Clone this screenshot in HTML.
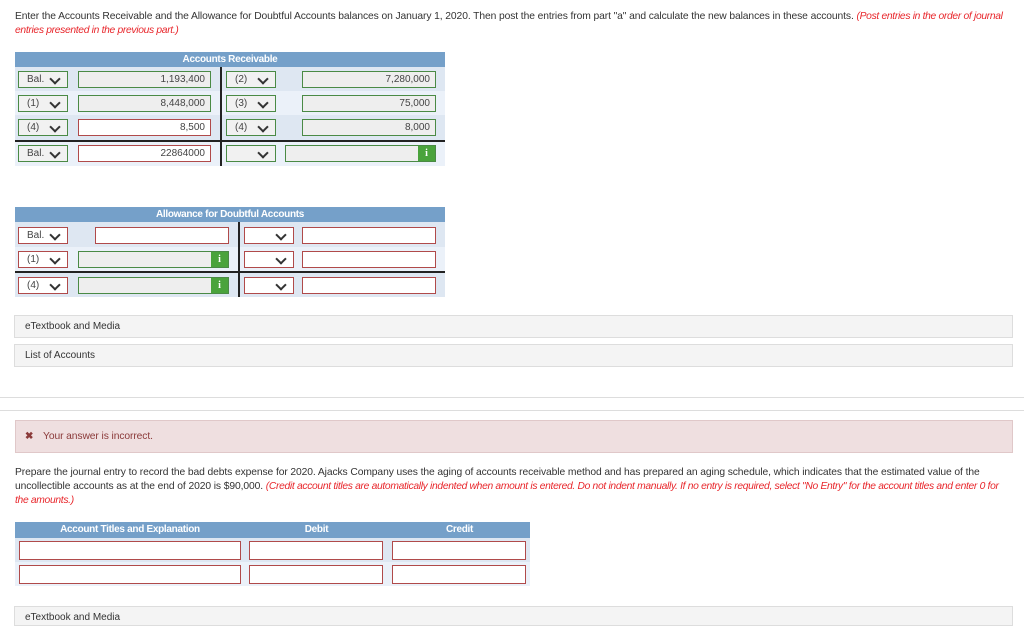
<!DOCTYPE html>
<html><head><meta charset="utf-8"><style>
*{box-sizing:border-box;margin:0;padding:0}
body{width:1024px;height:615px;background:#fff;position:relative;overflow:hidden;font-family:"Liberation Sans",sans-serif;color:#333;font-size:9px}
.a{position:absolute}
.t{position:absolute;white-space:nowrap;font-size:10.3px;color:#333;letter-spacing:-0.1px}
.r{color:#e8262b;font-style:italic;letter-spacing:-0.32px}
.hd{position:absolute;background:#75a0c9;color:#fff;font-weight:bold;font-size:10px;text-align:center;line-height:15px;letter-spacing:-0.3px}
.bg1{position:absolute;background:#dee7f2}
.bg2{position:absolute;background:#ebf1f9}
.sel{position:absolute;height:17px;width:50px;border:1px solid #4a8a45;background:#f1f1f1;font-size:10px;line-height:15px;padding-left:8px;color:#444}
.sel.red{border-color:#b04a4a;background:#fff}
.sel::after{content:"";position:absolute;right:8px;top:3px;width:6px;height:6px;border-right:2px solid #333;border-bottom:2px solid #333;transform:rotate(45deg)}
.in{position:absolute;height:17px;border:1px solid #4a8a45;background:#eee;font-size:10px;line-height:15px;text-align:right;padding-right:5px;color:#444}
.in.red{border-color:#b04a4a;background:#fff}
.ib{position:absolute;right:0;top:0;width:17px;height:15px;background:#4aa33c;color:#fff;font-weight:bold;font-family:"Liberation Serif",serif;text-align:center;line-height:15px;font-size:10px}
.vl{position:absolute;background:#222;width:2px}
.hl{position:absolute;background:#222;height:2px}
.box{position:absolute;left:14px;width:999px;height:23px;background:#f4f4f4;border:1px solid #ddd;line-height:21px;padding-left:10px;font-size:10px;color:#333}
.jin{position:absolute;height:19px;border:1px solid #b04a4a;background:#fff}
</style></head><body>
<div class="t" style="left:15px;top:11px">Enter the Accounts Receivable and the Allowance for Doubtful Accounts balances on January 1, 2020. Then post the entries from part "a" and calculate the new balances in these accounts. <span class="r">(Post entries in the order of journal</span></div>
<div class="t r" style="left:15px;top:25px">entries presented in the previous part.)</div>

<!-- AR -->
<div class="hd" style="left:15px;top:52px;width:430px">Accounts Receivable</div>
<div class="bg1" style="left:15px;top:67px;width:430px;height:24px"></div>
<div class="bg2" style="left:15px;top:91px;width:430px;height:24px"></div>
<div class="bg1" style="left:15px;top:115px;width:430px;height:25px"></div>
<div class="bg2" style="left:15px;top:142px;width:430px;height:24px"></div>
<div class="vl" style="left:220px;top:67px;height:99px"></div>
<div class="hl" style="left:15px;top:140px;width:430px"></div>
<div class="sel" style="left:18px;top:71px">Bal.</div><div class="in" style="left:78px;top:71px;width:133px">1,193,400</div>
<div class="sel" style="left:226px;top:71px">(2)</div><div class="in" style="left:302px;top:71px;width:134px">7,280,000</div>
<div class="sel" style="left:18px;top:95px">(1)</div><div class="in" style="left:78px;top:95px;width:133px">8,448,000</div>
<div class="sel" style="left:226px;top:95px">(3)</div><div class="in" style="left:302px;top:95px;width:134px">75,000</div>
<div class="sel" style="left:18px;top:119px">(4)</div><div class="in red" style="left:78px;top:119px;width:133px">8,500</div>
<div class="sel" style="left:226px;top:119px">(4)</div><div class="in" style="left:302px;top:119px;width:134px">8,000</div>
<div class="sel" style="left:18px;top:145px">Bal.</div><div class="in red" style="left:78px;top:145px;width:133px">22864000</div>
<div class="sel" style="left:226px;top:145px"></div><div class="in" style="left:285px;top:145px;width:151px"><div class="ib">i</div></div>

<!-- Allowance -->
<div class="hd" style="left:15px;top:207px;width:430px">Allowance for Doubtful Accounts</div>
<div class="bg1" style="left:15px;top:222px;width:430px;height:25px"></div>
<div class="bg2" style="left:15px;top:247px;width:430px;height:24px"></div>
<div class="bg1" style="left:15px;top:273px;width:430px;height:24px"></div>
<div class="vl" style="left:238px;top:222px;height:75px;width:1.5px"></div>
<div class="hl" style="left:15px;top:271px;width:430px"></div>
<div class="sel red" style="left:18px;top:227px">Bal.</div><div class="in red" style="left:95px;top:227px;width:134px"></div>
<div class="sel red" style="left:244px;top:227px"></div><div class="in red" style="left:302px;top:227px;width:134px"></div>
<div class="sel red" style="left:18px;top:251px">(1)</div><div class="in" style="left:78px;top:251px;width:151px"><div class="ib">i</div></div>
<div class="sel red" style="left:244px;top:251px"></div><div class="in red" style="left:302px;top:251px;width:134px"></div>
<div class="sel red" style="left:18px;top:277px">(4)</div><div class="in" style="left:78px;top:277px;width:151px"><div class="ib">i</div></div>
<div class="sel red" style="left:244px;top:277px"></div><div class="in red" style="left:302px;top:277px;width:134px"></div>

<div class="box" style="top:315px">eTextbook and Media</div>
<div class="box" style="top:344px">List of Accounts</div>

<div class="a" style="left:0;top:397px;width:1024px;height:1px;background:#ddd"></div>
<div class="a" style="left:0;top:410px;width:1024px;height:1px;background:#ddd"></div>

<div class="a" style="left:15px;top:420px;width:998px;height:33px;background:#efdfe0;border:1px solid #e0c8c9"></div>
<div class="t" style="left:25px;top:431px;color:#8b3a3a;font-size:10px;font-weight:bold">✖</div>
<div class="t" style="left:43px;top:431px;color:#8b3a3a">Your answer is incorrect.</div>

<div class="t" style="left:15px;top:467px">Prepare the journal entry to record the bad debts expense for 2020. Ajacks Company uses the aging of accounts receivable method and has prepared an aging schedule, which indicates that the estimated value of the</div>
<div class="t" style="left:15px;top:481px">uncollectible accounts as at the end of 2020 is $90,000. <span class="r">(Credit account titles are automatically indented when amount is entered. Do not indent manually. If no entry is required, select "No Entry" for the account titles and enter 0 for</span></div>
<div class="t r" style="left:15px;top:495px">the amounts.)</div>

<div class="a" style="left:15px;top:522px;width:515px;height:16px;background:#75a0c9"></div>
<div class="hd" style="left:15px;top:522px;width:230px;background:none">Account Titles and Explanation</div>
<div class="hd" style="left:249px;top:522px;width:135px;background:none">Debit</div>
<div class="hd" style="left:392px;top:522px;width:135px;background:none">Credit</div>
<div class="bg1" style="left:15px;top:538px;width:515px;height:24px"></div>
<div class="bg2" style="left:15px;top:562px;width:515px;height:24px"></div>
<div class="jin" style="left:19px;top:541px;width:222px"></div><div class="jin" style="left:249px;top:541px;width:134px"></div><div class="jin" style="left:392px;top:541px;width:134px"></div>
<div class="jin" style="left:19px;top:565px;width:222px"></div><div class="jin" style="left:249px;top:565px;width:134px"></div><div class="jin" style="left:392px;top:565px;width:134px"></div>

<div class="box" style="top:606px;height:20px">eTextbook and Media</div>
</body></html>
